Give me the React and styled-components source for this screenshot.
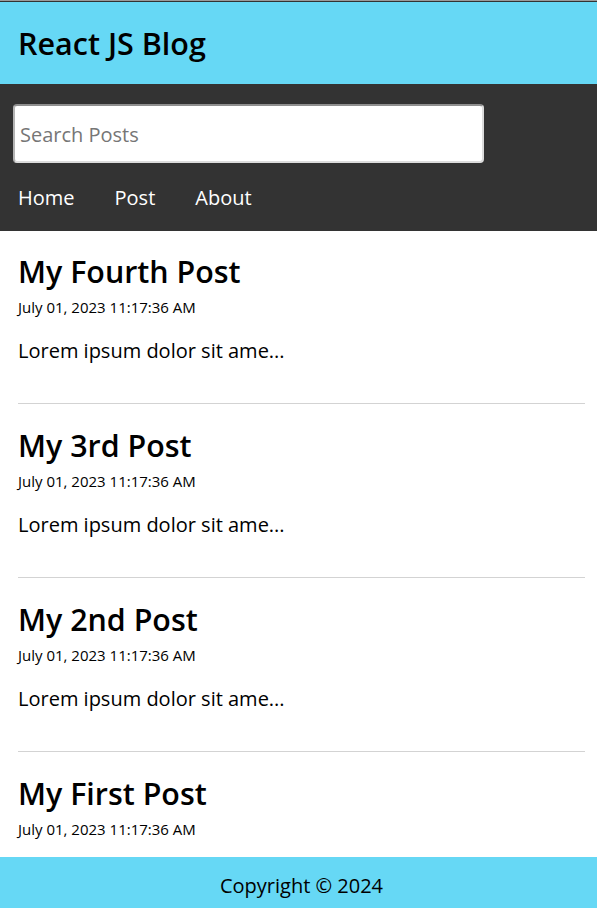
import styled, { createGlobalStyle } from 'styled-components';

const GlobalStyle = createGlobalStyle`
    * {
        box-sizing: border-box;
    }
    html, body {
        margin: 0;
        padding: 0;
    }
    body {
        padding-top: 1px;
        background-color: #9a9a9a;
        font-family: 'Open Sans', 'Noto Sans', sans-serif;
        overflow: hidden;
    }
`

const Shell = styled.div`
    height: calc(100vh - 1px);
    display: flex;
    flex-direction: column;
    border-top: 1px solid #333;
    background-color: #fff;
`

const Header = styled.header`
    height: 82px;
    flex-shrink: 0;
    background-color: #66d8f5;
    padding: 0 18px;
    display: flex;
    align-items: center;
`

const Brand = styled.h1`
    margin: 0;
    font-size: 30.5px;
    font-weight: 600;
    color: #000;
`

const Nav = styled.nav`
    flex-shrink: 0;
    background-color: #333;
    display: flex;
    flex-direction: column;
`

const SearchForm = styled.form`
    padding: 20px 0 0 13px;
`

const SearchInput = styled.input`
    width: 471px;
    height: 59px;
    font-family: 'Open Sans', sans-serif;
    font-size: 20px;
    padding: 2px 5px 0;
    border-radius: 4px;
    border: 2px solid #dcdcdc;
    border-top-color: #8f8f8f;
    border-left-color: #b4b4b4;
    outline: none;
    &::placeholder {
        color: #767676;
    }
`

const Links = styled.ul`
    list-style: none;
    margin: 0;
    padding: 21px 0 19px 18px;
    display: flex;
    gap: 40px;
`

const LinkItem = styled.li`
    font-size: 20px;
    line-height: 28px;
    color: #fff;
`

const Main = styled.main`
    flex: 1;
    overflow: hidden;
    padding: 21px 12px 0 18px;
`

const Article = styled.article`
    padding-bottom: 38px;
    border-bottom: 1px solid lightgray;
    & + & {
        margin-top: 22px;
    }
`

const PostTitle = styled.h2`
    margin: 0;
    font-size: 30.4px;
    line-height: 40px;
    font-weight: 600;
`

const PostDate = styled.p`
    margin: 5px 0 0;
    font-size: 15px;
    line-height: 20px;
`

const PostBody = styled.p`
    margin: 20px 0 0;
    font-size: 20px;
    line-height: 28px;
`

const Footer = styled.footer`
    height: 51px;
    flex-shrink: 0;
    background-color: #66d8f5;
    display: flex;
    align-items: center;
    justify-content: center;
    padding: 6px 0 0 6px;
    font-size: 20px;
    line-height: 28px;
`

const posts = [
    { id: 4, title: 'My Fourth Post' },
    { id: 3, title: 'My 3rd Post' },
    { id: 2, title: 'My 2nd Post' },
    { id: 1, title: 'My First Post' },
]

const App = () => {
    return (
        <>
            <GlobalStyle />
            <Shell>
                <Header>
                    <Brand>React JS Blog</Brand>
                </Header>
                <Nav>
                    <SearchForm onSubmit={(e) => e.preventDefault()}>
                        <SearchInput type="text" placeholder="Search Posts" />
                    </SearchForm>
                    <Links>
                        <LinkItem>Home</LinkItem>
                        <LinkItem>Post</LinkItem>
                        <LinkItem>About</LinkItem>
                    </Links>
                </Nav>
                <Main>
                    {posts.map((post) => (
                        <Article key={post.id}>
                            <PostTitle>{post.title}</PostTitle>
                            <PostDate>July 01, 2023 11:17:36 AM</PostDate>
                            <PostBody>Lorem ipsum dolor sit ame...</PostBody>
                        </Article>
                    ))}
                </Main>
                <Footer>Copyright © 2024</Footer>
            </Shell>
        </>
    )
}

export default App
